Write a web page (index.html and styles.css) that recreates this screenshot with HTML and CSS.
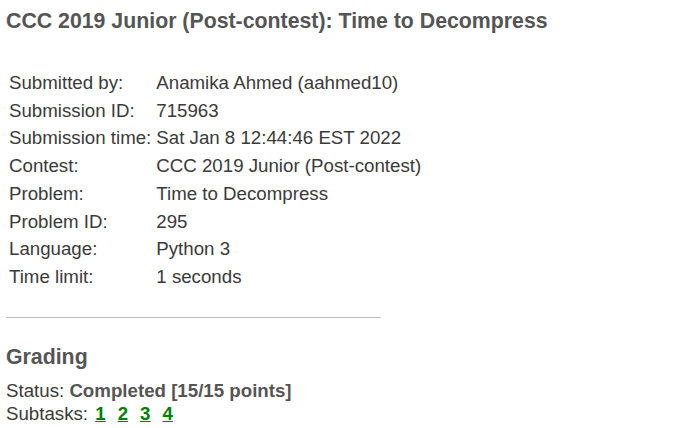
FILE: index.html
```html
<!DOCTYPE html>
<html lang="en">
<head>
  <link rel="stylesheet" href="styles.css">
</head>
<body>
  <div class="page">
    <h2 class="title">CCC 2019 Junior (Post-contest): Time to Decompress</h2>

    <table class="info">
      <tr><td>Submitted by:</td><td>Anamika Ahmed (aahmed10)</td></tr>
      <tr><td>Submission ID:</td><td>715963</td></tr>
      <tr><td>Submission time:</td><td>Sat Jan 8 12:44:46 EST 2022</td></tr>
      <tr><td>Contest:</td><td>CCC 2019 Junior (Post-contest)</td></tr>
      <tr><td>Problem:</td><td>Time to Decompress</td></tr>
      <tr><td>Problem ID:</td><td>295</td></tr>
      <tr><td>Language:</td><td>Python 3</td></tr>
      <tr><td>Time limit:</td><td>1 seconds</td></tr>
    </table>

    <hr class="divider">

    <h3 class="section">Grading</h3>
    <div class="line first">Status: <strong>Completed [15/15 points]</strong></div>
    <div class="line">Subtasks: <a href="#" class="sub">1</a><a href="#" class="sub">2</a><a href="#" class="sub">3</a><a href="#" class="sub">4</a></div>
  </div>
</body>
</html>
```

FILE: styles.css
```css
:root {
  --fg: #3a3a3a;
  --heading: #555;
  --ok: #008000;
  --rule: #bbb;
}

body {
  margin: 0;
  background: #fff;
  color: var(--fg);
  font-family: "Liberation Sans", Arial, sans-serif;
  font-size: 18.7px;
}

.page {
  padding: 0 6px;
}

.title {
  margin: 0;
  padding-top: 8px;
  font-size: 21.3px;
  line-height: 26px;
  color: var(--heading);
}

.info {
  margin-top: 34px;
  border-spacing: 2px;
}

.info td {
  padding: 2px 1px;
  line-height: 21.7px;
  vertical-align: top;
}

.info td:first-child {
  padding-right: 2px;
}

.divider {
  width: 375px;
  margin: 25px 0 0 0;
  border: none;
  border-top: 1px solid var(--rule);
}

.section {
  margin: 26px 0 0 0;
  font-size: 21.3px;
  line-height: 26px;
  color: var(--heading);
}

.line {
  line-height: 23px;
}

.line.first {
  margin-top: 9px;
}

.line strong {
  color: var(--heading);
}

.sub {
  color: var(--ok);
  font-weight: bold;
  margin: 0 10px 0 2px;
}
```
